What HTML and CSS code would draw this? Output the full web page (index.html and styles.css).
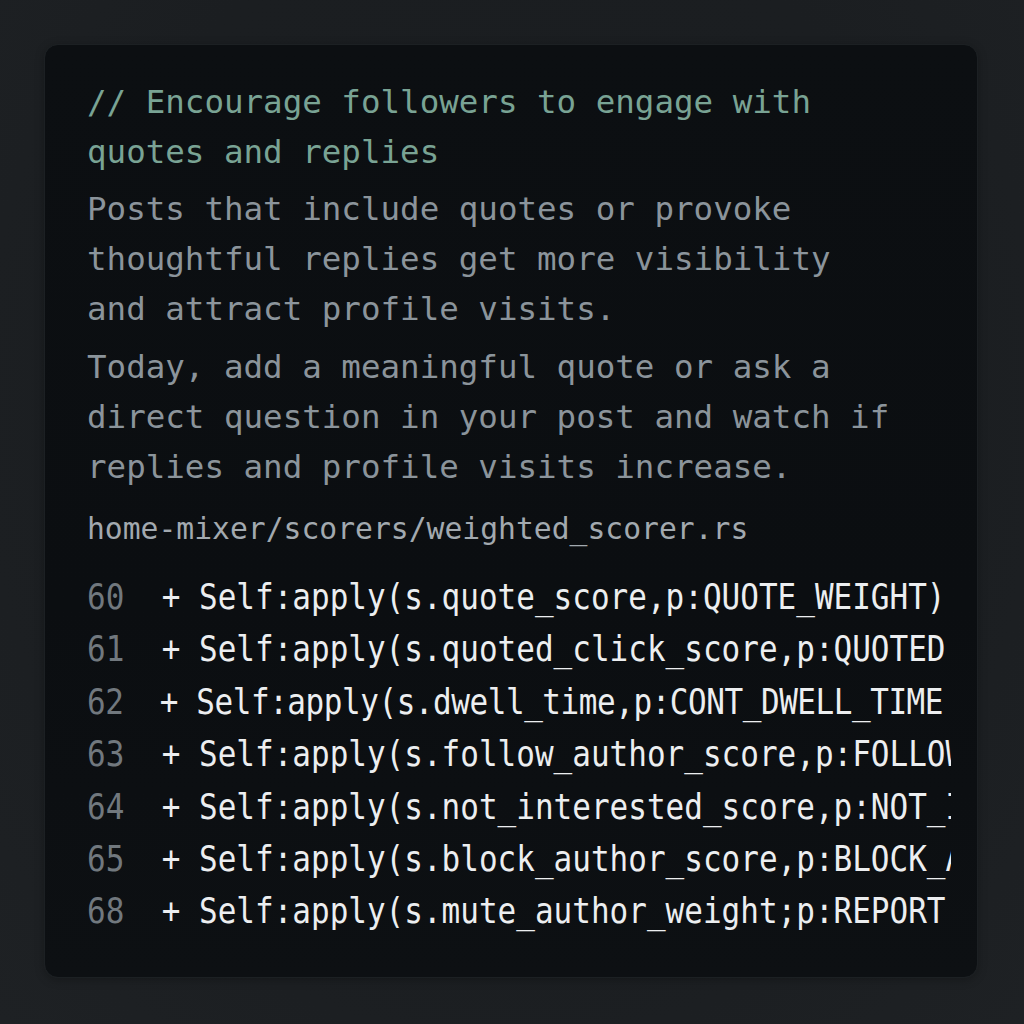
FILE: index.html
```html
<!DOCTYPE html>
<html lang="en">
<head>
<meta charset="utf-8">
<title>Weighted scorer tip</title>
<link rel="stylesheet" href="styles.css">
</head>
<body>
<main class="card">
  <div class="comment">
    <div class="line">// Encourage followers to engage with</div>
    <div class="line">quotes and replies</div>
  </div>
  <div class="para">
    <div class="line">Posts that include quotes or provoke</div>
    <div class="line">thoughtful replies get more visibility</div>
    <div class="line">and attract profile visits.</div>
  </div>
  <div class="para para-2">
    <div class="line">Today, add a meaningful quote or ask a</div>
    <div class="line">direct question in your post and watch if</div>
    <div class="line">replies and profile visits increase.</div>
  </div>
  <div class="path">home-mixer/scorers/weighted_scorer.rs</div>
  <div class="code">
    <div class="code-line"><span class="ln">60</span>  + Self:apply(s.quote_score,p:QUOTE_WEIGHT)</div>
    <div class="code-line"><span class="ln">61</span>  + Self:apply(s.quoted_click_score,p:QUOTED</div>
    <div class="code-line tight"><span class="ln">62</span>  + Self:apply(s.dwell_time,p:CONT_DWELL_TIME</div>
    <div class="code-line"><span class="ln">63</span>  + Self:apply(s.follow_author_score,p:FOLLOW</div>
    <div class="code-line"><span class="ln">64</span>  + Self:apply(s.not_interested_score,p:NOT_I</div>
    <div class="code-line"><span class="ln">65</span>  + Self:apply(s.block_author_score,p:BLOCK_A</div>
    <div class="code-line"><span class="ln">68</span>  + Self:apply(s.mute_author_weight;p:REPORT</div>
  </div>
</main>
</body>
</html>
```

FILE: styles.css
```css
html, body {
  margin: 0;
  padding: 0;
}
body {
  background: radial-gradient(ellipse at 50% 40%, #1a1d20 0%, #1b1e21 60%, #1e2124 100%);
  width: 1024px;
  height: 1024px;
  padding: 44px 46px 46px 44px;
  box-sizing: border-box;
  font-family: "DejaVu Sans Mono", "Liberation Mono", monospace;
}
.card {
  box-sizing: border-box;
  width: 934px;
  height: 934px;
  background: linear-gradient(180deg, #0c0f12 0%, #0b0e11 60%, #0d1013 100%);
  border: 1px solid #1c2023;
  border-radius: 14px;
  padding: 32px 26px 0 42px;
  overflow: hidden;
  box-shadow: 0 2px 10px rgba(0, 0, 0, 0.25);
}
.line {
  white-space: pre;
}
.comment {
  font-size: 32.5px;
  line-height: 50px;
  color: #79a394;
}
.para {
  margin-top: 7px;
  font-size: 32.5px;
  line-height: 50px;
  color: #8b949b;
}
.para-2 {
  margin-top: 8px;
}
.path {
  margin-top: 17px;
  font-size: 29.7px;
  line-height: 40px;
  color: #a2a9af;
  white-space: pre;
}
.code {
  margin-top: 22px;
  font-size: 31px;
  line-height: 52.4px;
  color: #eceef0;
  overflow: hidden;
}
.code-line {
  white-space: pre;
  transform: scaleY(1.12);
  transform-origin: 0 60%;
}
.code-line.tight {
  letter-spacing: -0.45px;
}
.ln {
  color: #71787e;
}
```
